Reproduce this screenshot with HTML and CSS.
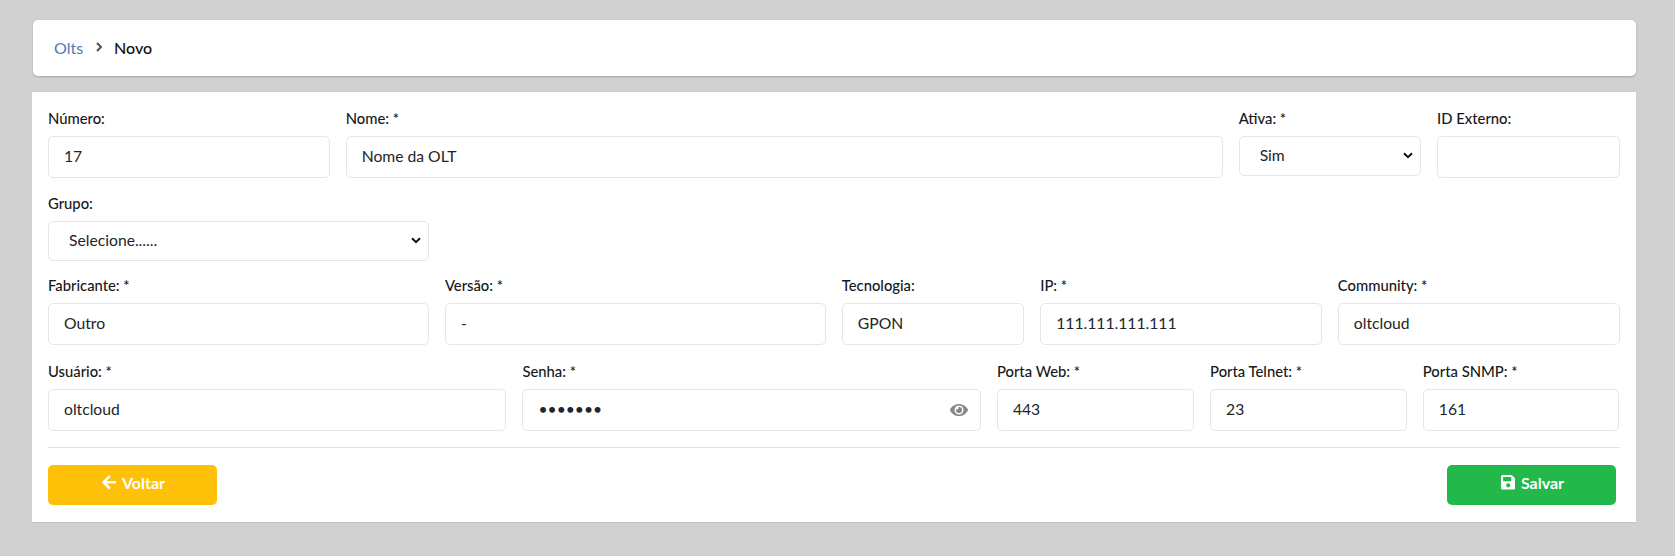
FILE: index.html
```html
<!DOCTYPE html>
<html lang="pt-BR">
<head>
<meta charset="utf-8">
<title>Olts - Novo</title>
<link rel="stylesheet" href="styles.css">
</head>
<body>
<main class="page">
  <nav class="crumbs">
    <a class="crumb-link" href="#">Olts</a>
    <svg class="crumb-sep" viewBox="0 0 6 10" aria-hidden="true"><path d="M1 1l4 4-4 4" fill="none" stroke="currentColor" stroke-width="2.200"/></svg>
    <span class="crumb-current">Novo</span>
  </nav>
  <form class="card">
    <div class="row grid16">
      <div class="field s3"><label>Número:</label><input class="ctl" value="17"></div>
      <div class="field s9"><label>Nome: *</label><input class="ctl" value="Nome da OLT"></div>
      <div class="field s2"><label>Ativa: *</label><select class="ctl sel"><option>Sim</option></select></div>
      <div class="field s2"><label>ID Externo:</label><input class="ctl"></div>
    </div>
    <div class="row compact grid16">
      <div class="field s4"><label>Grupo:</label><select class="ctl sel"><option>Selecione......</option></select></div>
    </div>
    <div class="row roomy grid16">
      <div class="field s4"><label>Fabricante: *</label><input class="ctl" value="Outro"></div>
      <div class="field s4"><label>Versão: *</label><input class="ctl" value="-"></div>
      <div class="field s2"><label>Tecnologia:</label><input class="ctl" value="GPON"></div>
      <div class="field s3"><label>IP: *</label><input class="ctl" value="111.111.111.111"></div>
      <div class="field s3"><label>Community: *</label><input class="ctl" value="oltcloud"></div>
    </div>
    <div class="row grid-last">
      <div class="field"><label>Usuário: *</label><input class="ctl" value="oltcloud"></div>
      <div class="field"><label>Senha: *</label>
        <div class="pw"><input class="ctl" type="password" value="1234567">
          <svg class="eye" viewBox="0 0 576 512" aria-hidden="true"><path d="M572.520 241.400C518.290 135.590 410.930 64 288 64S57.680 135.640 3.480 241.410a32.350 32.350 0 0 0 0 29.190C57.710 376.410 165.070 448 288 448s230.320-71.640 284.520-177.410a32.350 32.350 0 0 0 0-29.190zM288 400a144 144 0 1 1 144-144 143.930 143.930 0 0 1-144 144zm0-240a95.310 95.310 0 0 0-25.310 3.790 47.850 47.850 0 0 1-66.900 66.900A95.780 95.780 0 1 0 288 160z"/></svg>
        </div>
      </div>
      <div class="field"><label>Porta Web: *</label><input class="ctl" value="443"></div>
      <div class="field"><label>Porta Telnet: *</label><input class="ctl" value="23"></div>
      <div class="field"><label>Porta SNMP: *</label><input class="ctl" value="161"></div>
    </div>
    <hr class="sep">
    <div class="actions">
      <button type="button" class="btn back"><svg class="ico" viewBox="0 0 448 512" aria-hidden="true"><path d="M257.500 445.100l-22.200 22.200c-9.400 9.400-24.600 9.400-33.900 0L7 273c-9.400-9.400-9.400-24.600 0-33.900L201.400 44.700c9.400-9.400 24.600-9.400 33.900 0l22.200 22.200c9.500 9.500 9.300 25-.4 34.300L136.600 216H424c13.300 0 24 10.700 24 24v32c0 13.300-10.700 24-24 24H136.600l120.500 114.800c9.800 9.300 10 24.800.4 34.300z"/></svg>Voltar</button>
      <button type="button" class="btn save"><svg class="ico" viewBox="0 0 448 512" aria-hidden="true"><path d="M433.941 129.941l-83.882-83.882A48 48 0 0 0 316.118 32H48C21.490 32 0 53.490 0 80v352c0 26.510 21.490 48 48 48h352c26.510 0 48-21.490 48-48V163.882a48 48 0 0 0-14.059-33.941zM224 416c-35.346 0-64-28.654-64-64 0-35.346 28.654-64 64-64s64 28.654 64 64c0 35.346-28.654 64-64 64zm96-304.520V212c0 6.627-5.373 12-12 12H76c-6.627 0-12-5.373-12-12V108c0-6.627 5.373-12 12-12h228.520c3.183 0 6.235 1.264 8.485 3.515l3.480 3.480A11.996 11.996 0 0 1 320 111.480z"/></svg>Salvar</button>
    </div>
  </form>
</main>
</body>
</html>
```

FILE: styles.css
```css
* { box-sizing: border-box; }
html, body { margin: 0; height: 100%; }
body {
  background: #d1d1d1;
  font-family: Lato, "Liberation Sans", sans-serif;
  font-size: 15px;
  color: #212529;
}
.page { padding: 20px 39px 0 31.5px; display: flex; flex-direction: column; gap: 16px; }
.crumbs {
  height: 56px;
  margin: 0 0 0 1.5px;
  padding: 0 21px 2px;
  background: #fff;
  border-radius: 5px;
  box-shadow: 0 1px 2px rgba(0,0,0,.22);
  display: flex;
  align-items: center;
  gap: 12.5px;
  font-size: 16px;
}
.crumb-link { color: #4d7cb5; text-decoration: none; }
.crumb-sep { width: 6px; height: 10px; color: #555; }
.crumb-current { color: #111; font-weight: 500; }
.card {
  background: #fff;
  padding: 16.5px 16.5px 17px;
  box-shadow: 0 1px 1px rgba(0,0,0,.06);
}
.row { margin-bottom: 16px; }
.compact { margin-bottom: 15px; }
.roomy { margin-bottom: 17px; }
.grid16 { display: grid; grid-template-columns: repeat(16, minmax(0, 1fr)); column-gap: 16px; }
.grid-last {
  display: grid;
  grid-template-columns: minmax(0, 458fr) minmax(0, 458fr) minmax(0, 197fr) minmax(0, 196.5fr) minmax(0, 196.5fr);
  column-gap: 16px;
  margin-bottom: 0;
}
.s2 { grid-column: span 2; }
.s3 { grid-column: span 3; }
.s4 { grid-column: span 4; }
.s9 { grid-column: span 9; }
.field { min-width: 0; display: flex; flex-direction: column; align-items: stretch; }
label { display: block; font-size: 14.8px; font-weight: 500; line-height: 18px; margin-bottom: 9.5px; color: #15181b; }
.ctl {
  display: block;
  width: 100%;
  height: 41.5px;
  padding: 0 15px 2px;
  border: 1px solid #e6e6e6;
  border-radius: 5px;
  background: #fff;
  font-family: Lato, "Liberation Sans", sans-serif;
  font-size: 15.7px;
  color: #212529;
  outline: none;
}
.sel {
  height: 39.5px;
  padding: 0 30px 1px 20px;
  appearance: none;
  background-image: url("data:image/svg+xml,%3Csvg xmlns='http://www.w3.org/2000/svg' viewBox='0 0 10 7'%3E%3Cpath d='M1 1.200l4 4 4-4' fill='none' stroke='%23111' stroke-width='2'/%3E%3C/svg%3E");
  background-repeat: no-repeat;
  background-size: 10px 7px;
  background-position: right 7px center;
}
.pw { position: relative; }
.eye { position: absolute; right: 12.5px; top: 12.75px; width: 18px; height: 16px; fill: #888; }
.sep { border: 0; border-top: 1px solid #e3e3e3; margin: 16px 0 17px; }
.actions { display: flex; justify-content: space-between; padding-right: 3.5px; }
.btn {
  width: 169px;
  height: 40px;
  padding: 0 0 4px 2px;
  border: 0;
  border-radius: 5px;
  color: #fff;
  font-family: Lato, "Liberation Sans", sans-serif;
  font-size: 16px;
  font-weight: 700;
  display: flex;
  align-items: center;
  justify-content: center;
  gap: 5.5px;
}
.back { background: #ffc107; }
.save { background: #22b84a; }
.ico { width: 14.5px; height: 16.5px; fill: currentColor; }
```
